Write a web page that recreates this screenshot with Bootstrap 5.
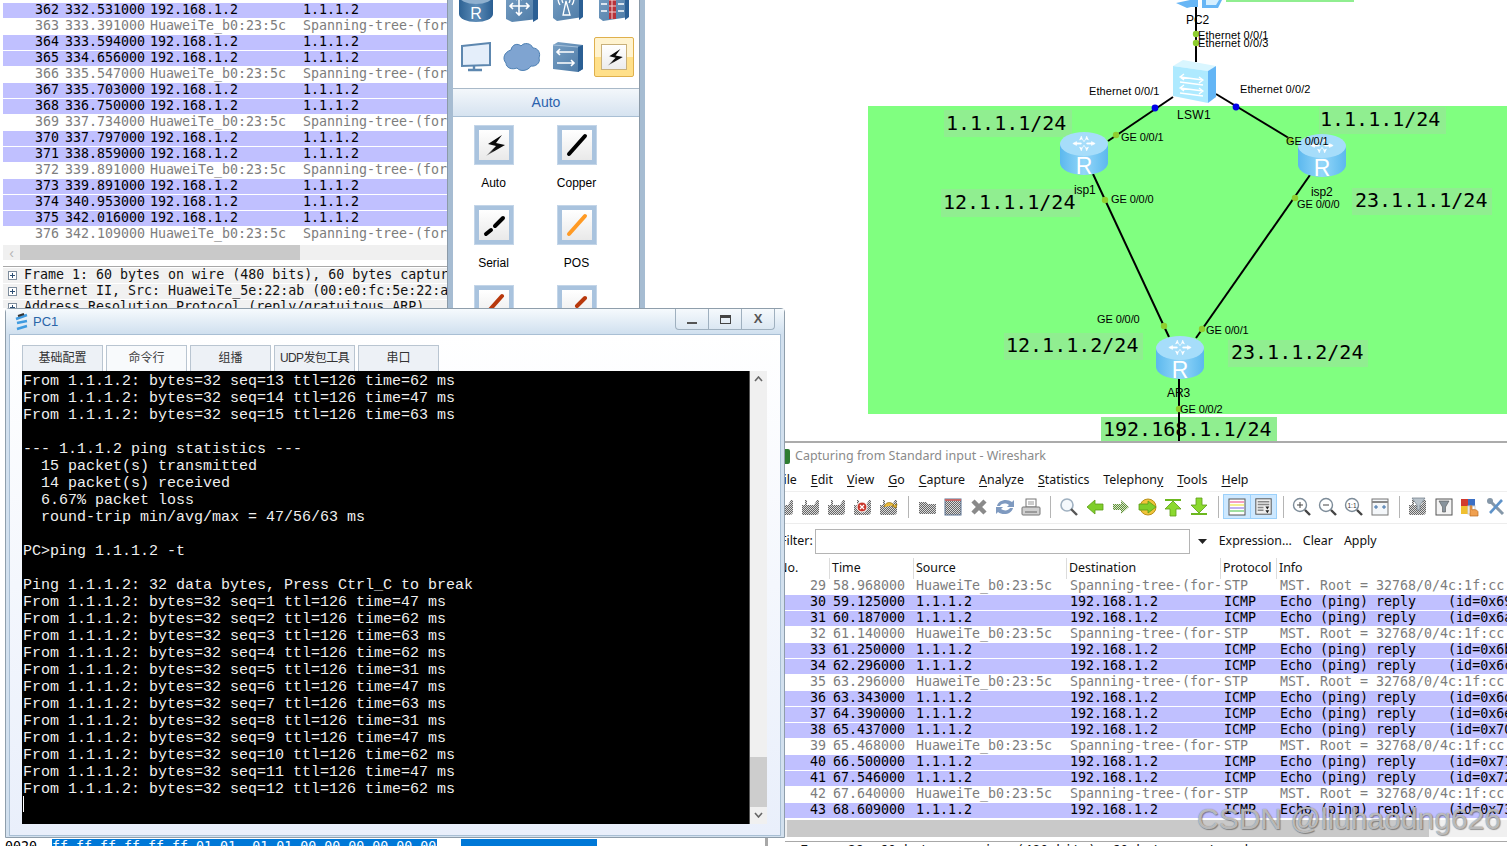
<!DOCTYPE html>
<html lang="zh">
  <head>
    <meta charset="UTF-8" />
    <title>eNSP / Wireshark</title>
    <link
      rel="stylesheet"
      href="https://cdn.jsdelivr.net/npm/bootstrap@5.3.0/dist/css/bootstrap.min.css"
    />
    <style>
      html, body { margin: 0; background: #fff; overflow: hidden; }
      .desk { position: relative; width: 1507px; height: 846px; overflow: hidden; background: #fff; }
      .pkt { font: 13.3px/14px "DejaVu Sans Mono", monospace; }
      .pkt-row { display: grid; height: 16px; overflow: hidden; color: #000; }
      .pkt-row > span { overflow: hidden; padding-left: 4px; white-space: pre; }
      .pkt-row > span:first-child { text-align: right; padding: 0 2px 0 0; }
      .pkt-icmp { background: linear-gradient(#c0c0ff 15px, #fff 15px); }
      .pkt-stp { background: #fff; color: #7d7d7d; }

      /* top left capture + device panel */
      .left-win { position: absolute; left: 3px; top: 0; width: 642px; height: 308px; z-index: 1; }
      .left-list { width: 444px; padding-top: 3px; overflow: hidden; }
      .left-list .pkt-row { grid-template-columns: 58px 85px 153px 148px; }
      .left-sash { width: 6px; background: #a6bcd2; border-left: 1px solid #8b9aa8; }
      .hscroll { height: 15px; margin-top: 2px; background: #f0f0f0; display: flex; align-items: center; }
      .hscroll b { font: 400 14px "Liberation Sans", sans-serif; color: #b5b5b5; width: 17px; text-align: center; }
      .hscroll i { display: block; height: 100%; width: 280px; background: #c9c9c9; }
      .tree { border-top: 1px solid #a8a8a8; margin-top: 6px; padding-top: 1px; }
      .tree-row { height: 16px; background: #f1f1f1; box-shadow: inset 0 -1px #fff; display: flex; overflow: hidden; color: #111; white-space: pre; }
      .tree-box { flex: none; width: 9px; height: 9px; margin: 3px 7px 0 5px; border: 1px solid #7d8c9c; background: #fff; position: relative; }
      .tree-box::before { content: ""; position: absolute; left: 1px; top: 3px; width: 5px; height: 1px; background: #2d4f74; }
      .tree-box::after { content: ""; position: absolute; left: 3px; top: 1px; width: 1px; height: 5px; background: #2d4f74; }

      .ensp { width: 186px; background: #fff; overflow: hidden; }
      .ensp-devs { display: grid; grid-template-columns: repeat(4, 46px); grid-auto-rows: 52px; margin-top: -21px; }
      .ensp-devs > div { display: flex; align-items: center; justify-content: center; }
      .ensp-sel { width: 40px; height: 40px; border: 1px solid #dfb04c; border-radius: 2px; background: linear-gradient(#fff3cf 0 50%, #ffe08a 50% 100%); padding: 6px; }
      .ensp-sel svg, .cab-tile svg { display: block; }
      .ensp-sel span { display: block; height: 26px; background: linear-gradient(#fff, #ececec); border: 1px solid #c8b07a; }
      .ensp-head { height: 29px; margin-top: 5px; background: linear-gradient(#f3f7fb, #d6e3f0); border-top: 1px solid #a9b9c8; border-bottom: 1px solid #a9bfd4; color: #2b62ad; font: 14px/27px "Liberation Sans", sans-serif; text-align: center; }
      .ensp-cables { display: grid; grid-template-columns: 83px 83px; grid-auto-rows: 80px; margin-left: -1px; }
      .cab { text-align: center; padding-top: 8px; font: 12px/16px "Liberation Sans", sans-serif; color: #000; }
      .cab-tile { width: 40px; height: 40px; margin: 0 auto 10px; padding: 4px; background: #a9c3de; border: 1px solid #c3d5e8; }
      .cab-tile span { display: block; width: 30px; height: 30px; background: linear-gradient(#fff, #e9e9e9); }

      /* PC1 console */
      .pc-win { position: absolute; left: 5px; top: 308px; width: 780px; height: 530px; z-index: 3; background: #d2e0ee; border: 1px solid #8f9eab; border-radius: 4px 4px 0 0; padding: 0 3px 2px 3px; }
      .pc-title { height: 25px; background: linear-gradient(#f6fafd, #d0e0ef); margin: 0 -3px; padding-left: 9px; position: relative; color: #2a65a8; font: 13px "Liberation Sans", sans-serif; }
      .pc-ctrl { position: absolute; right: 9px; top: 0; width: 100px; height: 21px; border: 1px solid #9fb0bf; border-top: 0; border-radius: 0 0 4px 4px; display: flex; background: linear-gradient(#f5f9fc, #dbe7f2); color: #555; }
      .pc-ctrl > div { flex: 1; border-left: 1px solid #9fb0bf; position: relative; font: 700 13px/19px "Liberation Sans", sans-serif; text-align: center; }
      .pc-ctrl > div:first-child { border-left: 0; }
      .ctl-min::after { content: ""; position: absolute; left: 11px; top: 13px; width: 10px; height: 2px; background: #555; }
      .ctl-max::after { content: ""; position: absolute; left: 11px; top: 6px; width: 11px; height: 9px; border: 1px solid #444; border-top-width: 3px; }
      .pc-client { height: 502px; background: linear-gradient(#fff, #e9effb); border: 1px solid #a9bfd4; padding: 10px 13px 0 12px; }
      .pc-tabs { gap: 3px; height: 26px; flex-wrap: nowrap; }
      .pc-tabs .nav-link { width: 81px; height: 26px; padding: 0; text-align: center; background: #edf1f6; border: 1px solid #b9c5d1; border-bottom: 0; color: #333; font: 12px/25px "Liberation Sans", "Noto Sans CJK SC", sans-serif; white-space: nowrap; }
      .pc-tabs .nav-link.active { background: #f8fafc; color: #444; }
      .pc-tabs .tab-narrow { letter-spacing: -.6px; }
      .pc-term-wrap { height: 453px; }
      .pc-term { width: 729px; height: 453px; background: #000; color: #efefef; margin: 0; padding: 2px 0 0 1px; overflow: hidden; font: 15px/17px "Liberation Mono", monospace; position: relative; border-right: 1px solid #555; }
      .pc-cursor { position: absolute; left: 1px; top: 425px; width: 1px; height: 16px; background: #fff; }
      .pc-vbar { width: 17px; background: #f0f0f0; display: flex; flex-direction: column; align-items: center; color: #666; }
      .pc-vbar svg { margin: 5px 0; flex: none; }
      .pc-thumb { width: 100%; height: 50px; background: #cdcdcd; margin-top: auto; }
      .pc-vbar .bot { margin: 5px 0 6px; }

      /* hex strip */
      .hex { position: absolute; left: 0; top: 838px; width: 768px; height: 8px; overflow: hidden; z-index: 2; background: #fff; border-right: 3px solid #a8a8a8; }
      .hex .pkt { display: flex; color: #000; margin-top: 1px; line-height: 15px; white-space: pre; }
      .hex-off { width: 48px; padding-left: 5px; margin-right: 4px; }
      .hex-a { width: 385px; background: #0078d7; color: #fff; }
      .hex-b { width: 136px; background: #0078d7; margin-left: 24px; }

      /* topology */
      .topo { position: absolute; left: 785px; top: 0; z-index: 0; display: block; }
      .topo .ip { font: 20px "DejaVu Sans Mono", monospace; fill: #000; }
      .topo .lb { font: 11px "Liberation Sans", sans-serif; letter-spacing: -.1px; fill: #000; }
      .topo .lb-e { letter-spacing: .1px; }
      .topo .lb-b { font-size: 12px; }
      .topo .lb-w { font-size: 12px; letter-spacing: .3px; }
      .topo .rt-r { font: 23px "Liberation Sans", sans-serif; fill: #fff; text-anchor: middle; }

      /* lower wireshark */
      .ws { position: absolute; left: 770px; top: 441px; width: 737px; height: 405px; border-top: 2px solid #ababab; background: #fff; z-index: 2; overflow: hidden; padding-left: 15px; }
      .ws-ui { font-family: "Noto Sans", sans-serif; font-size: 12.4px; color: #111; }
      .ws-title { height: 27px; display: flex; align-items: center; color: #8a8a8a; font-size: 12.5px; gap: 5px; }
      .ws-title i { width: 5px; height: 15px; background: #2f7d32; border-radius: 0 2px 2px 0; }
      .ws-menu { height: 22px; gap: 14px; margin-left: -8px; line-height: 20px; border-bottom: 1px solid #efefef; white-space: nowrap; }
      .ws-menu u { text-underline-offset: 2px; }
      .ws-tools { height: 32px; padding-bottom: 2px; margin-left: -13px; align-items: center; border-bottom: 1px solid #ededed; }
      .ws-tools svg { width: 26px; height: 20px; flex: none; }
      .ws-sep { width: 12px; height: 22px; flex: none; position: relative; }
      .ws-sep::after { content: ""; position: absolute; left: 6px; top: 0; width: 1px; height: 22px; background: #b5b5b5; }
      .ws-hi { display: flex; height: 25px; align-items: center; background: #cde8ff; border: 1px solid #9cd1fb; margin-left: -1px; }
      .ws-hi svg + svg { border-left: 1px solid #9cd1fb; height: 23px; }
      .ws-filter { height: 34px; align-items: center; margin-left: -13px; }
      .ws-filter .form-control { width: 375px; height: 25px; min-height: 0; border-radius: 0; border: 1px solid #b4b4b4; padding: 0 4px; margin-left: 2px; }
      .ws-gap { margin-left: 11px; }
      .ws-head { display: grid; grid-template-columns: 44px 84px 153px 154px 56px 231px; height: 21px; line-height: 19px; }
      .ws-head > span { padding-left: 2px; border-left: 1px solid #dcdcdc; overflow: hidden; white-space: nowrap; }
      .ws-head > span:first-child { border-left: 0; padding-left: 0; margin-left: -7px; overflow: visible; }
      .ws-list .pkt-row { grid-template-columns: 44px 83px 154px 154px 56px 231px; }
      .ws-list .pkt-row > span:first-child { padding-right: 3px; }
      .ws-band { height: 17px; margin-top: 1px; background: #f0f0f0; padding-left: 2px; }
      .ws-band i { display: block; height: 100%; width: 642px; background: #c9c9c9; }
      .ws-rest { border-top: 1px solid #a8a8a8; margin-top: 4px; padding: 2px 0 0 15px; color: #111; white-space: pre; }

      .wmark { position: absolute; left: 1197px; top: 802px; z-index: 5; font: 30px "Liberation Sans", sans-serif; white-space: nowrap; color: rgba(255, 255, 255, .55); text-shadow: 0 0 1px #666, 1px 1px 1px rgba(0, 0, 0, .35); }
    </style>
  </head>
  <body>
    <svg width="0" height="0" class="position-absolute">
      <defs>
        <pattern id="chk" width="2" height="2" patternUnits="userSpaceOnUse"><rect width="2" height="2" fill="#dadada" /><rect width="1" height="1" fill="#666" /><rect x="1" y="1" width="1" height="1" fill="#666" /></pattern>
        <pattern id="chkg" width="2" height="2" patternUnits="userSpaceOnUse"><rect width="2" height="2" fill="#d8e8c8" /><rect width="1" height="1" fill="#5f8f3a" /><rect x="1" y="1" width="1" height="1" fill="#5f8f3a" /></pattern>
        <linearGradient id="gRt" x1="0" x2="1" y1="0" y2="0"><stop offset="0" stop-color="#5cb8ee" /><stop offset=".5" stop-color="#93d6f9" /><stop offset="1" stop-color="#5cb8ee" /></linearGradient>
        <linearGradient id="gDk" x1="0" x2="1" y1="0" y2="0"><stop offset="0" stop-color="#2d6294" /><stop offset=".5" stop-color="#5e8db8" /><stop offset="1" stop-color="#2a5e92" /></linearGradient>
        <linearGradient id="gBx" x1="0" x2="1" y1="0" y2="1"><stop offset="0" stop-color="#79a0c4" /><stop offset="1" stop-color="#4c7aa6" /></linearGradient>
        <linearGradient id="gBolt" x1="0" x2="1" y1="1" y2="0"><stop offset="0" stop-color="#aaa" /><stop offset=".35" stop-color="#111" /><stop offset="1" stop-color="#000" /></linearGradient>
        <symbol id="card" viewBox="0 0 26 20"><path d="M4 8h3V3h2v5h7l3-5h2v13l-2 2H4z" fill="url(#chk)" /></symbol>
        <symbol id="arrows" viewBox="0 0 28 18"><path d="M9 5l3-1-1-3M19 5l-3-1 1-3M9 13l3 1-1 3M19 13l-3 1 1 3M12 4 14 7M16 4 14 7M12 14 14 11M16 14 14 11M2 9l4-2v1.400h5v1.200H6V11ZM26 9l-4-2v1.400h-5v1.200h5V11Z" fill="#fff" stroke="#fff" stroke-width=".8" /></symbol>
        <symbol id="bolt" viewBox="0 0 30 30"><path d="M23 5 9 14 17 16 7 26 26 15 17 13Z" fill="url(#gBolt)" /></symbol>
      </defs>
    </svg>

    <div class="desk">
      <!-- топология -->
      <svg class="topo" width="722" height="441" viewBox="785 0 722 441">
        <rect x="868" y="106" width="639" height="308" fill="#80ff80" />
        <rect x="1226" y="0" width="128" height="2" fill="#90ee90" />
        <g fill="#90ee90">
          <rect x="944" y="110" width="128" height="27" />
          <rect x="1319" y="107" width="127" height="27" />
          <rect x="941" y="189" width="139" height="28" />
          <rect x="1352" y="188" width="140" height="27" />
          <rect x="1004" y="333" width="139" height="27" />
          <rect x="1228" y="340" width="140" height="27" />
          <rect x="1101" y="417" width="176" height="24" />
        </g>
        <text class="ip" x="946" y="130">1.1.1.1/24</text>
        <text class="ip" x="1320" y="126">1.1.1.1/24</text>
        <text class="ip" x="943" y="209">12.1.1.1/24</text>
        <text class="ip" x="1355" y="207">23.1.1.1/24</text>
        <text class="ip" x="1006" y="352">12.1.1.2/24</text>
        <text class="ip" x="1231" y="359">23.1.1.2/24</text>
        <text class="ip" x="1103" y="436">192.168.1.1/24</text>

        <g stroke="#000" stroke-width="2" fill="none">
          <path d="M1196 0V62" />
          <path d="M1173 97 1108 141" />
          <path d="M1216 94 1292 140" />
          <path d="M1093 174 1169 337" />
          <path d="M1310 175 1196 338" />
          <path d="M1179 378V441" />
        </g>
        <g fill="#0000e6"><circle cx="1155" cy="108" r="3.400" /><circle cx="1236" cy="107" r="3.400" /></g>
        <g fill="#8fce2f">
          <circle cx="1196" cy="34" r="3.200" /><circle cx="1196" cy="43" r="3.200" />
          <circle cx="1116" cy="135" r="3.200" /><circle cx="1290" cy="140" r="3.200" />
          <circle cx="1105" cy="200" r="3.200" /><circle cx="1295" cy="198" r="3.200" />
          <circle cx="1164" cy="326" r="3.200" /><circle cx="1202" cy="329" r="3.200" />
          <circle cx="1179" cy="409" r="3.200" />
        </g>

        <!-- PC2 -->
        <path d="M1176 3 1190 0h8v7h-7l-4 1zM1202 0h20l-4 8h-16z" fill="#68b6f5" />
        <path d="M1206 0h13l-3 5h-10z" fill="#d6efff" />
        <!-- LSW1 -->
        <g>
          <path d="M1173 66 1183 60 1216 66 1208 71z" fill="#d9f6ff" />
          <path d="M1173 66 1208 71V103L1173 96z" fill="#aeeaff" />
          <path d="M1208 71 1216 66V97L1208 103z" fill="#63b5f5" />
          <path d="M1180 77 1203 80M1180 82 1203 85M1180 88 1203 91M1180 93 1203 96M1184 74 1180 77 1184 80M1199 77 1203 80 1199 83M1184 85 1180 88 1184 91M1199 88 1203 91 1199 94" stroke="#fff" stroke-width="1.300" fill="none" />
        </g>
        <!-- routers -->
        <g>
          <path d="M1060 144V163A24 12 0 0 0 1108 163V144Z" fill="url(#gRt)" />
          <ellipse cx="1084" cy="144" rx="24" ry="12" fill="#a6ddfa" />
          <use href="#arrows" x="1071" y="135" width="26" height="17" />
          <text class="rt-r" x="1084" y="174">R</text>
        </g>
        <g>
          <path d="M1298 146V165A24 12 0 0 0 1346 165V146Z" fill="url(#gRt)" />
          <ellipse cx="1322" cy="146" rx="24" ry="12" fill="#a6ddfa" />
          <use href="#arrows" x="1309" y="137" width="26" height="17" />
          <text class="rt-r" x="1322" y="176">R</text>
        </g>
        <g>
          <path d="M1156 348V367A24 12 0 0 0 1204 367V348Z" fill="url(#gRt)" />
          <ellipse cx="1180" cy="348" rx="24" ry="12" fill="#a6ddfa" />
          <use href="#arrows" x="1167" y="339" width="26" height="17" />
          <text class="rt-r" x="1180" y="378">R</text>
        </g>

        <text class="lb lb-b" x="1186" y="24">PC2</text>
        <text class="lb lb-e" x="1198" y="39">Ethernet 0/0/1</text>
        <text class="lb lb-e" x="1198" y="47">Ethernet 0/0/3</text>
        <text class="lb lb-e" x="1089" y="95">Ethernet 0/0/1</text>
        <text class="lb lb-e" x="1240" y="93">Ethernet 0/0/2</text>
        <text class="lb lb-w" x="1177" y="119">LSW1</text>
        <text class="lb" x="1121" y="141">GE 0/0/1</text>
        <text class="lb" x="1286" y="145">GE 0/0/1</text>
        <text class="lb lb-b" x="1074" y="194">isp1</text>
        <text class="lb" x="1111" y="203">GE 0/0/0</text>
        <text class="lb lb-b" x="1311" y="196">isp2</text>
        <text class="lb" x="1297" y="208">GE 0/0/0</text>
        <text class="lb" x="1097" y="323">GE 0/0/0</text>
        <text class="lb" x="1206" y="334">GE 0/0/1</text>
        <text class="lb lb-b" x="1167" y="397">AR3</text>
        <text class="lb" x="1180" y="413">GE 0/0/2</text>
      </svg>

      <!-- верхнее окно -->
      <div class="left-win d-flex">
        <div class="left-list pkt">
          <div id="top-rows"></div>
          <div class="hscroll"><b>&lsaquo;</b><i></i></div>
          <div class="tree">
            <div class="tree-row"><span class="tree-box"></span>Frame 1: 60 bytes on wire (480 bits), 60 bytes captur</div>
            <div class="tree-row"><span class="tree-box"></span>Ethernet II, Src: HuaweiTe_5e:22:ab (00:e0:fc:5e:22:a</div>
            <div class="tree-row"><span class="tree-box"></span>Address Resolution Protocol (reply/gratuitous ARP)</div>
          </div>
        </div>
        <div class="left-sash"></div>
        <div class="ensp">
          <div class="ensp-devs">
            <div>
              <svg width="36" height="36" viewBox="0 0 36 36"><path d="M1 9V27A17 8 0 0 0 35 27V9Z" fill="url(#gDk)" /><ellipse cx="18" cy="9" rx="17" ry="8" fill="#8fb0cf" /><text x="18" y="32" text-anchor="middle" font-family="Liberation Sans" font-size="16" fill="#fff">R</text></svg>
            </div>
            <div>
              <svg width="34" height="36" viewBox="0 0 34 36"><path d="M1 4 28 2 33 5V32L7 35 1 32Z" fill="url(#gBx)" /><path d="M28 5 33 5V32L28 35Z" fill="#2b5f94" /><path d="M14 10V28M5 19H24M11 13l3-3 3 3M11 25l3 3 3-3M8 16l-3 3 3 3M21 16l3 3-3 3" stroke="#fff" stroke-width="1.600" fill="none" /></svg>
            </div>
            <div>
              <svg width="32" height="36" viewBox="0 0 32 36"><path d="M1 3 27 1 31 4V30L5 34 1 31Z" fill="url(#gBx)" /><path d="M27 4 31 4V30L27 33Z" fill="#2b5f94" /><path d="M14 14 11 28H18ZM8 6A11 11 0 0 0 8 18M20 6A11 11 0 0 1 20 18M11 9A7 7 0 0 0 11 16M17 9A7 7 0 0 1 17 16" stroke="#fff" stroke-width="1.300" fill="none" /></svg>
            </div>
            <div>
              <svg width="32" height="36" viewBox="0 0 32 36"><path d="M1 3 27 1 31 4V30L5 34 1 31Z" fill="url(#gBx)" /><path d="M27 4 31 4V30L27 33Z" fill="#2b5f94" /><rect x="11" y="1" width="7" height="31" fill="#b8323a" /><path d="M11 7h7M11 13h7M11 19h7M11 25h7M14 1v31" stroke="#f2d0d0" /><path d="M3 10h6M3 17h6M3 24h6M20 10h6M20 17h6M20 24h6" stroke="#fff" stroke-width="1.300" /></svg>
            </div>
            <div>
              <svg width="30" height="30" viewBox="0 0 30 30"><path d="M1 4 29 1V23L1 24Z" fill="#e4eefa" stroke="#5d87af" stroke-width="2" /><path d="M13 24V27M7 28H21" stroke="#5d87af" stroke-width="2.400" /></svg>
            </div>
            <div>
              <svg width="38" height="32" viewBox="0 0 38 32"><path d="M8 9C9 3 15 2 18 5 21 1 28 2 30 7 35 7 38 12 36 17 38 22 32 26 28 25 25 30 17 31 14 27 9 29 3 27 3 22-1 18 1 11 8 9Z" fill="#7fa4d1" stroke="#4d80b3" /></svg>
            </div>
            <div>
              <svg width="32" height="30" viewBox="0 0 32 30"><path d="M1 3 6 0 31 3V27L26 30 1 27Z" fill="url(#gBx)" /><path d="M26 30V5L31 3V27Z" fill="#2b5f94" /><path d="M1 3 26 5" stroke="#a6c1db" /><path d="M5 10H22M5 21H22M8 7l-3 3 3 3M19 18l3 3-3 3" stroke="#fff" stroke-width="1.600" fill="none" /></svg>
            </div>
            <div>
              <div class="ensp-sel"><span><svg width="24" height="24"><use href="#bolt" width="24" height="24" /></svg></span></div>
            </div>
          </div>
          <div class="ensp-head">Auto</div>
          <div class="ensp-cables">
            <div class="cab"><div class="cab-tile"><span><svg width="30" height="30"><use href="#bolt" width="30" height="30" /></svg></span></div>Auto</div>
            <div class="cab"><div class="cab-tile"><span><svg width="30" height="30" viewBox="0 0 30 30"><path d="M7 24 23 6" stroke="#000" stroke-width="4" stroke-linecap="round" /></svg></span></div>Copper</div>
            <div class="cab"><div class="cab-tile"><span><svg width="30" height="30" viewBox="0 0 30 30"><path d="M7 24 12 20M16 16 24 8" stroke="#000" stroke-width="4" stroke-linecap="round" /></svg></span></div>Serial</div>
            <div class="cab"><div class="cab-tile"><span><svg width="30" height="30" viewBox="0 0 30 30"><path d="M7 24 23 6" stroke="#ff9a24" stroke-width="4" stroke-linecap="round" /></svg></span></div>POS</div>
            <div class="cab"><div class="cab-tile"><span><svg width="30" height="30" viewBox="0 0 30 30"><path d="M7 24 23 6" stroke="#b8380c" stroke-width="4" stroke-linecap="round" /></svg></span></div></div>
            <div class="cab"><div class="cab-tile"><span><svg width="30" height="30" viewBox="0 0 30 30"><path d="M7 24 11 20M15 16 23 8" stroke="#b8380c" stroke-width="4" stroke-linecap="round" /></svg></span></div></div>
          </div>
        </div>
        <div class="left-sash"></div>
      </div>

      <!-- PC1 -->
      <div class="pc-win">
        <div class="pc-title d-flex align-items-center gap-1">
          <svg width="14" height="18" viewBox="0 0 14 18"><path d="M1 6 12 2M2 10 12 8M2 16 12 13" stroke="#3f9be0" stroke-width="2.500" /><path d="M3 3 9 1" stroke="#333" stroke-width="2" /></svg>
          <span>PC1</span>
          <div class="pc-ctrl">
            <div class="ctl-min"></div>
            <div class="ctl-max"></div>
            <div>X</div>
          </div>
        </div>
        <div class="pc-client">
          <ul class="nav pc-tabs">
            <li class="nav-item"><a class="nav-link" href="#">基础配置</a></li>
            <li class="nav-item"><a class="nav-link active" href="#">命令行</a></li>
            <li class="nav-item"><a class="nav-link" href="#">组播</a></li>
            <li class="nav-item"><a class="nav-link tab-narrow" href="#">UDP发包工具</a></li>
            <li class="nav-item"><a class="nav-link" href="#">串口</a></li>
          </ul>
          <div class="pc-term-wrap d-flex">
<pre class="pc-term">From 1.1.1.2: bytes=32 seq=13 ttl=126 time=62 ms
From 1.1.1.2: bytes=32 seq=14 ttl=126 time=47 ms
From 1.1.1.2: bytes=32 seq=15 ttl=126 time=63 ms

--- 1.1.1.2 ping statistics ---
  15 packet(s) transmitted
  14 packet(s) received
  6.67% packet loss
  round-trip min/avg/max = 47/56/63 ms

PC&gt;ping 1.1.1.2 -t

Ping 1.1.1.2: 32 data bytes, Press Ctrl_C to break
From 1.1.1.2: bytes=32 seq=1 ttl=126 time=47 ms
From 1.1.1.2: bytes=32 seq=2 ttl=126 time=62 ms
From 1.1.1.2: bytes=32 seq=3 ttl=126 time=63 ms
From 1.1.1.2: bytes=32 seq=4 ttl=126 time=62 ms
From 1.1.1.2: bytes=32 seq=5 ttl=126 time=31 ms
From 1.1.1.2: bytes=32 seq=6 ttl=126 time=47 ms
From 1.1.1.2: bytes=32 seq=7 ttl=126 time=63 ms
From 1.1.1.2: bytes=32 seq=8 ttl=126 time=31 ms
From 1.1.1.2: bytes=32 seq=9 ttl=126 time=47 ms
From 1.1.1.2: bytes=32 seq=10 ttl=126 time=62 ms
From 1.1.1.2: bytes=32 seq=11 ttl=126 time=47 ms
From 1.1.1.2: bytes=32 seq=12 ttl=126 time=62 ms<span class="pc-cursor"></span></pre>
            <div class="pc-vbar">
              <svg width="9" height="6" viewBox="0 0 9 6"><path d="M1 5 4.500 1 8 5" fill="none" stroke="#666" stroke-width="1.600" /></svg>
              <div class="pc-thumb"></div>
              <svg class="bot" width="9" height="6" viewBox="0 0 9 6"><path d="M1 1 4.500 5 8 1" fill="none" stroke="#666" stroke-width="1.600" /></svg>
            </div>
          </div>
        </div>
      </div>

      <div class="hex">
        <div class="pkt">
          <span class="hex-off">0020</span>
          <span class="hex-a">ff ff ff ff ff ff 01 01  01 01 00 00 00 00 00 00</span>
          <span class="hex-b"></span>
        </div>
      </div>

      <!-- нижний wireshark -->
      <div class="ws">
        <div class="ws-ui">
          <div class="ws-title"><i></i><span>Capturing from Standard input - Wireshark</span></div>
          <nav class="ws-menu d-flex">
            <span><u>F</u>ile</span><span><u>E</u>dit</span><span><u>V</u>iew</span><span><u>G</u>o</span><span><u>C</u>apture</span><span><u>A</u>nalyze</span><span><u>S</u>tatistics</span><span>Telephon<u>y</u></span><span><u>T</u>ools</span><span><u>H</u>elp</span>
          </nav>
          <div class="ws-tools d-flex">
            <svg viewBox="0 0 26 20"><use href="#card" /></svg>
            <svg viewBox="0 0 26 20"><use href="#card" /></svg>
            <svg viewBox="0 0 26 20"><use href="#card" /></svg>
            <svg viewBox="0 0 26 20"><use href="#card" /><circle cx="12" cy="10" r="5" fill="#c9372c" stroke="#fff" /><path d="M10 8l4 4M14 8l-4 4" stroke="#fff" stroke-width="1.300" /></svg>
            <svg viewBox="0 0 26 20"><use href="#card" /><path d="M8 10c1-5 7-6 10-2l-2 1 4 2 1-4-2 1" fill="#e9b93a" stroke="#8a6a10" stroke-width=".7" /></svg>
            <span class="ws-sep"></span>
            <svg viewBox="0 0 26 20"><path d="M5 5h7l2 2h8v10H5z" fill="url(#chk)" /></svg>
            <svg viewBox="0 0 26 20"><rect x="5" y="2" width="16" height="16" fill="url(#chk)" stroke="#5d7594" /><rect x="5" y="2" width="16" height="2" fill="#c46a6a" /></svg>
            <svg viewBox="0 0 26 20"><path d="M7 4 19 16M19 4 7 16" stroke="#8a8a8a" stroke-width="4.500" /></svg>
            <svg viewBox="0 0 26 20"><path d="M5 9C6 3 15 1 20 5l2-2v7h-7l2-2C14 6 10 6 8 9ZM21 11C20 17 11 19 6 15l-2 2v-7h7l-2 2c3 2 7 2 9-1Z" fill="#7f9ac0" /></svg>
            <svg viewBox="0 0 26 20"><rect x="8" y="2" width="10" height="8" fill="#fff" stroke="#777" /><path d="M10 5h6M10 7h6" stroke="#999" /><rect x="4" y="10" width="18" height="8" rx="1" fill="#cfcfcf" stroke="#777" /><path d="M7 15h12" stroke="#666" /></svg>
            <span class="ws-sep"></span>
            <svg viewBox="0 0 26 20"><circle cx="11" cy="8" r="6" fill="#f4f8fc" stroke="#9fb0c0" stroke-width="1.600" /><path d="M15 12 21 18" stroke="#555" stroke-width="2.400" /></svg>
            <svg viewBox="0 0 26 20"><path d="M5 10 13 3V7H21V13H13V17Z" fill="#7fce2a" stroke="#5d9c16" stroke-width=".8" /></svg>
            <svg viewBox="0 0 26 20"><path d="M21 10 13 3V7H5V13H13V17Z" fill="url(#chkg)" /></svg>
            <svg viewBox="0 0 26 20"><circle cx="14" cy="10" r="8" fill="#f0c43a" stroke="#b8901a" /><path d="M22 10 14 4V7H5V13H14V16Z" fill="#7fce2a" stroke="#5d9c16" stroke-width=".8" /></svg>
            <svg viewBox="0 0 26 20"><path d="M5 2H21V4H5Z" fill="#6cb81f" /><path d="M13 4 21 12H16V19H10V12H5Z" fill="#8bd92f" stroke="#5d9c16" stroke-width=".8" /></svg>
            <svg viewBox="0 0 26 20"><path d="M5 16H21V18H5Z" fill="#6cb81f" /><path d="M13 16 21 8H16V1H10V8H5Z" fill="#8bd92f" stroke="#5d9c16" stroke-width=".8" /></svg>
            <span class="ws-sep"></span>
            <div class="ws-hi">
              <svg viewBox="0 0 26 20"><rect x="5" y="2" width="16" height="16" fill="#fff" stroke="#555" /><path d="M6 5h14" stroke="#f5a0c0" stroke-width="2" /><path d="M6 8h14" stroke="#f5ef90" stroke-width="2" /><path d="M6 11h14" stroke="#c0b0f0" stroke-width="2" /><path d="M6 14h14" stroke="#a0e0a0" stroke-width="2" /></svg>
              <svg viewBox="0 0 26 20"><rect x="5" y="2" width="16" height="16" fill="#eee" stroke="#555" /><path d="M7 5h12M7 8h12M7 11h6M7 14h6" stroke="#888" stroke-width="1.500" /><path d="M15 10h4l-2 3zM15 14h4l-2 3z" fill="#222" /></svg>
            </div>
            <span class="ws-sep"></span>
            <svg viewBox="0 0 26 20"><circle cx="11" cy="8" r="6.500" fill="#fff" stroke="#7d8c99" stroke-width="1.400" /><path d="M8 8h6M11 5v6" stroke="#444" /><path d="M16 13 21 18" stroke="#444" stroke-width="2.400" /></svg>
            <svg viewBox="0 0 26 20"><circle cx="11" cy="8" r="6.500" fill="#fff" stroke="#7d8c99" stroke-width="1.400" /><path d="M8 8h6" stroke="#444" /><path d="M16 13 21 18" stroke="#444" stroke-width="2.400" /></svg>
            <svg viewBox="0 0 26 20"><circle cx="11" cy="8" r="6.500" fill="#fff" stroke="#7d8c99" stroke-width="1.400" /><text x="11" y="10.500" text-anchor="middle" font-family="Liberation Sans" font-size="6.500" fill="#333">1:1</text><path d="M16 13 21 18" stroke="#444" stroke-width="2.400" /></svg>
            <svg viewBox="0 0 26 20"><rect x="5" y="2" width="16" height="16" fill="#f4f7fa" stroke="#777" /><path d="M5 5h16" stroke="#888" stroke-width="2" /><path d="M9 8v4M7 10h4M17 8v4M15 10h4" stroke="#3b6ea8" /></svg>
            <span class="ws-sep"></span>
            <svg viewBox="0 0 26 20"><use href="#card" /><path d="M7 1H20L15 8V13H12V8Z" fill="#b9c3cb" stroke="#6d7a85" stroke-width=".7" /></svg>
            <svg viewBox="0 0 26 20"><rect x="5" y="2" width="16" height="16" fill="#f4f4f4" stroke="#555" /><path d="M8 4H18L14.500 10V15H11.500V10Z" fill="#88939c" stroke="#555" stroke-width=".6" /></svg>
            <svg viewBox="0 0 26 20"><rect x="4" y="2" width="7" height="7" fill="#d13a2e" /><rect x="11" y="2" width="7" height="7" fill="#3b6fc4" /><rect x="4" y="9" width="7" height="8" fill="#f0c030" /><rect x="11" y="9" width="7" height="8" fill="#fff" stroke="#ccc" /><path d="M13 19V10c0-2 2-2 2 0v3c2-1 6 0 6 2v4Z" fill="#f0a050" stroke="#b96a20" stroke-width=".7" /></svg>
            <svg viewBox="0 0 26 20"><path d="M7 4 20 17" stroke="#8597a8" stroke-width="3" /><path d="M19 3 7 16" stroke="#5f93c9" stroke-width="2.600" /><circle cx="7" cy="4" r="3" fill="#8597a8" /></svg>
          </div>
          <div class="ws-filter d-flex">
            <span class="ms-2">Filter:</span>
            <input class="form-control" type="text" />
            <svg class="mx-2" width="9" height="5" viewBox="0 0 9 5"><path d="M0 0h9L4.500 5z" fill="#222" /></svg>
            <span class="ms-1">Expression...</span>
            <span class="ws-gap">Clear</span>
            <span class="ws-gap">Apply</span>
          </div>
          <div class="ws-head">
            <span>No.</span><span>Time</span><span>Source</span><span>Destination</span><span>Protocol</span><span>Info</span>
          </div>
        </div>
        <div class="ws-list pkt" id="ws-rows"></div>
        <div class="ws-band"><i></i></div>
        <div class="ws-rest pkt">Frame 29: 60 bytes on wire (480 bits), 60 bytes captured</div>
      </div>

      <div class="wmark">CSDN @liuhaodng626</div>
    </div>

    <script>
      // верхний список пакетов
      const topData = [
        [362, "332.531000", 0], [363, "333.391000", 1], [364, "333.594000", 0],
        [365, "334.656000", 0], [366, "335.547000", 1], [367, "335.703000", 0],
        [368, "336.750000", 0], [369, "337.734000", 1], [370, "337.797000", 0],
        [371, "338.859000", 0], [372, "339.891000", 1], [373, "339.891000", 0],
        [374, "340.953000", 0], [375, "342.016000", 0], [376, "342.109000", 1],
      ];
      document.getElementById("top-rows").innerHTML = topData
        .map((r) =>
          r[2]
            ? `<div class="pkt-row pkt-stp"><span>${r[0]}</span><span>${r[1]}</span><span>HuaweiTe_b0:23:5c</span><span>Spanning-tree-(for</span></div>`
            : `<div class="pkt-row pkt-icmp"><span>${r[0]}</span><span>${r[1]}</span><span>192.168.1.2</span><span>1.1.1.2</span></div>`
        )
        .join("");

      // нижний список пакетов
      const wsData = [
        [29, "58.968000", ""], [30, "59.125000", "69"], [31, "60.187000", "6a"],
        [32, "61.140000", ""], [33, "61.250000", "6b"], [34, "62.296000", "6c"],
        [35, "63.296000", ""], [36, "63.343000", "6d"], [37, "64.390000", "6e"],
        [38, "65.437000", "70"], [39, "65.468000", ""], [40, "66.500000", "71"],
        [41, "67.546000", "72"], [42, "67.640000", ""], [43, "68.609000", "73"],
      ];
      document.getElementById("ws-rows").innerHTML = wsData
        .map((r) =>
          r[2]
            ? `<div class="pkt-row pkt-icmp"><span>${r[0]}</span><span>${r[1]}</span><span>1.1.1.2</span><span>192.168.1.2</span><span>ICMP</span><span>Echo (ping) reply    (id=0x${r[2]}</span></div>`
            : `<div class="pkt-row pkt-stp"><span>${r[0]}</span><span>${r[1]}</span><span>HuaweiTe_b0:23:5c</span><span>Spanning-tree-(for-</span><span>STP</span><span>MST. Root = 32768/0/4c:1f:cc</span></div>`
        )
        .join("");
    </script>
    <script src="https://cdn.jsdelivr.net/npm/bootstrap@5.3.0/dist/js/bootstrap.bundle.min.js"></script>
  </body>
</html>
